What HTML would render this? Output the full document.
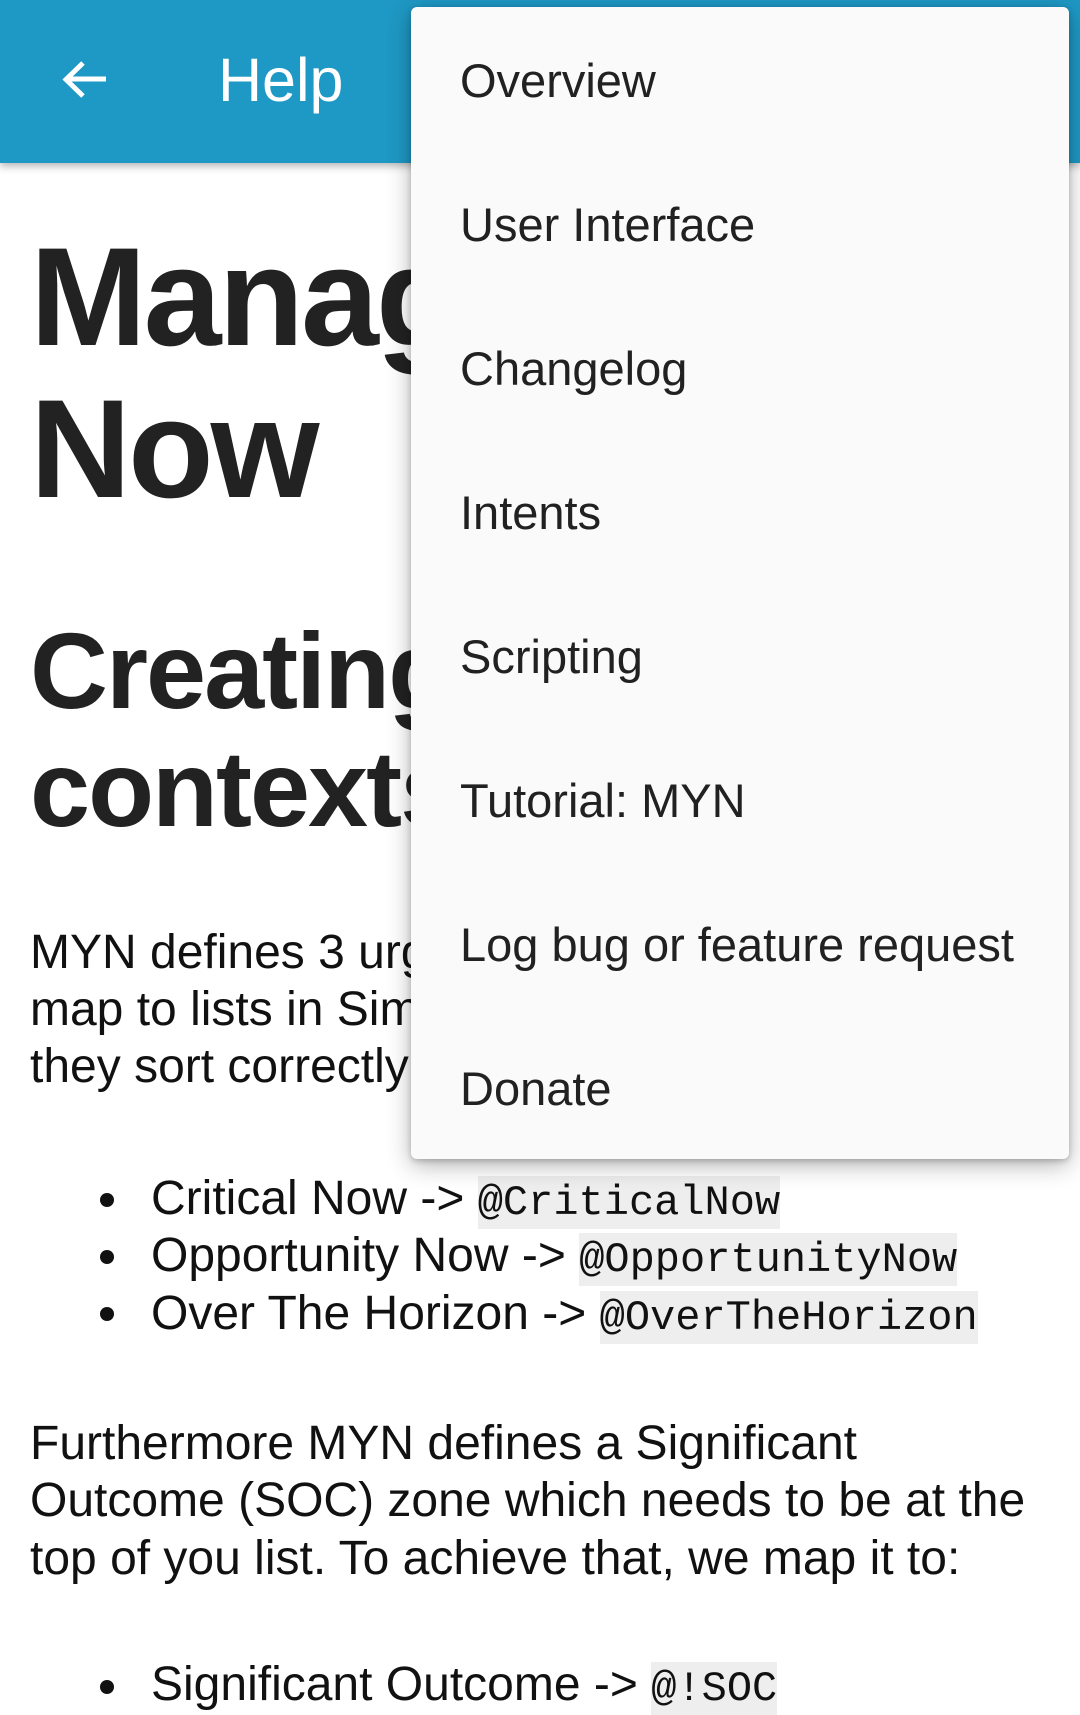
<!DOCTYPE html>
<html><head><meta charset="utf-8"><style>
*{margin:0;padding:0;box-sizing:border-box}
body{width:1080px;height:1699px;overflow:hidden;background:#fff;position:relative;font-family:"Liberation Sans",sans-serif;color:#212121}
.t{position:absolute;white-space:nowrap;line-height:1}
.bar{position:absolute;left:0;top:0;width:1080px;height:163px;background:#1e98c4;box-shadow:0 3px 8px rgba(0,0,0,.3)}
.h1{font-weight:bold;font-size:140px;color:#222;letter-spacing:-3px}
.h2{font-weight:bold;font-size:108px;color:#222;letter-spacing:-2px}
.p{font-size:48px;color:#111}
code{font-family:"Liberation Mono",monospace;font-size:42px;background:#eee;padding:3px 0 2px}
.dot{position:absolute;width:14px;height:14px;border-radius:50%;background:#111}
.menu{position:absolute;left:411px;top:7px;width:658px;height:1152px;background:#fafafa;border-radius:6px;box-shadow:0 6px 24px rgba(0,0,0,.3),0 2px 6px rgba(0,0,0,.2)}
.mi{position:absolute;left:49px;font-size:47px;color:#212121;white-space:nowrap;line-height:1}
</style></head><body>
<div class="bar">
<svg style="position:absolute;left:56px;top:52px" width="56" height="56" viewBox="0 0 56 56"><path d="M50 27H11M27 11L10 27.5 27 44" stroke="#fff" stroke-width="5" fill="none"/></svg>
<div class="t" style="left:218px;top:50px;font-size:61px;color:#fff">Help</div>
</div>
<div class="t h1" style="left:30px;top:227px">Manag</div>
<div class="t h1" style="left:30px;top:379px">Now</div>
<div class="t h2" style="left:30px;top:617px">Creating</div>
<div class="t h2" style="left:30px;top:735px">contexts</div>
<div class="t p" style="left:30px;top:929px">MYN defines 3 urgency zones</div>
<div class="t p" style="left:30px;top:986px">map to lists in Simpletask so</div>
<div class="t p" style="left:30px;top:1043px">they sort correctly</div>
<div class="dot" style="left:100px;top:1193px"></div>
<div class="t p" style="left:151px;top:1175px">Critical Now -&gt; <code>@CriticalNow</code></div>
<div class="dot" style="left:100px;top:1250px"></div>
<div class="t p" style="left:151px;top:1232px">Opportunity Now -&gt; <code>@OpportunityNow</code></div>
<div class="dot" style="left:100px;top:1307px"></div>
<div class="t p" style="left:151px;top:1290px">Over The Horizon -&gt; <code>@OverTheHorizon</code></div>
<div class="t p" style="left:30px;top:1420px">Furthermore MYN defines a Significant</div>
<div class="t p" style="left:30px;top:1477px">Outcome (SOC) zone which needs to be at the</div>
<div class="t p" style="left:30px;top:1535px">top of you list. To achieve that, we map it to:</div>
<div class="dot" style="left:100px;top:1680px"></div>
<div class="t p" style="left:151px;top:1661px">Significant Outcome -&gt; <code>@!SOC</code></div>
<div class="menu">
<div class="mi" style="top:50px">Overview</div>
<div class="mi" style="top:194px">User Interface</div>
<div class="mi" style="top:338px">Changelog</div>
<div class="mi" style="top:482px">Intents</div>
<div class="mi" style="top:626px">Scripting</div>
<div class="mi" style="top:770px">Tutorial: MYN</div>
<div class="mi" style="top:914px">Log bug or feature request</div>
<div class="mi" style="top:1058px">Donate</div>
</div>
</body></html>
